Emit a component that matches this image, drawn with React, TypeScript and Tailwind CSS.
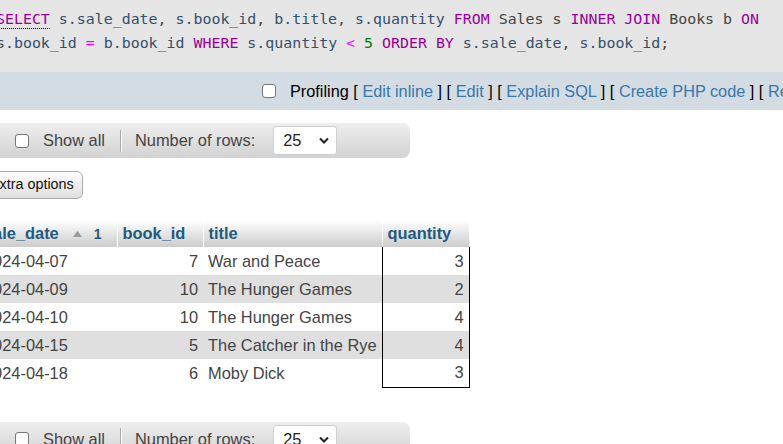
const kw = 'text-[#990099]';
const col = 'text-[#34506b]';
const tbl = 'text-[#444]';
const op = 'text-[#ff00ff]';
const num = 'text-[#008000]';

const rows = [
  { date: '2024-04-07', id: 7, title: 'War and Peace', qty: 3 },
  { date: '2024-04-09', id: 10, title: 'The Hunger Games', qty: 2 },
  { date: '2024-04-10', id: 10, title: 'The Hunger Games', qty: 4 },
  { date: '2024-04-15', id: 5, title: 'The Catcher in the Rye', qty: 4 },
  { date: '2024-04-18', id: 6, title: 'Moby Dick', qty: 3 },
];

const Checkbox = () => (
  <span className="inline-block w-[14px] h-[14px] shrink-0 rounded-[3px] border border-[#767676] bg-white" />
);

const Chevron = () => (
  <svg width="10" height="7" viewBox="0 0 10 7">
    <polyline points="1,1.5 5,5.5 9,1.5" fill="none" stroke="#222" strokeWidth="2" />
  </svg>
);

const NavBar = () => (
  <div className="flex items-center h-[35px] w-[431px] rounded-lg bg-gradient-to-b from-[#eeeeee] to-[#d2d2d2] pl-[36px] text-[16.4px] text-[#444] whitespace-nowrap">
    <Checkbox />
    <span className="ml-[14px]">Show all</span>
    <span className="ml-[15px] h-[22px] w-[2px] border-l border-r border-l-[#a8a8a8] border-r-white" />
    <span className="ml-[13px]">Number of rows:</span>
    <div className="ml-[18px] flex items-center justify-between w-[64px] h-[29px] pl-[9px] pr-[7px] rounded-[3px] border border-[#cfcfcf] bg-white text-[#222]">
      <span>25</span>
      <Chevron />
    </div>
  </div>
);

const SortArrow = () => (
  <svg width="9" height="6" viewBox="0 0 9 6" className="inline-block ml-[14px] mb-[1px]">
    <polygon points="0,6 4.5,0 9,6" fill="#9a9a9a" />
  </svg>
);

export default function App() {
  return (
    <div className="w-[783px] h-[444px] overflow-hidden bg-white font-['Liberation_Sans',Arial,sans-serif]">
      {/* SQL query */}
      <div className="h-[72px] bg-[#e5e5e5] pt-[7px]">
        <div className="-ml-[4px] font-['DejaVu_Sans_Mono',monospace] text-[14.92px] leading-[24px] whitespace-pre text-[#444]">
          <div>
            <span className={`${kw} border-b border-dotted border-black`}>SELECT</span>{' '}
            <span className={col}>s.sale_date</span>, <span className={col}>s.book_id</span>,{' '}
            <span className={col}>b.title</span>, <span className={col}>s.quantity</span>{' '}
            <span className={kw}>FROM</span> <span className={tbl}>Sales s</span>{' '}
            <span className={kw}>INNER JOIN</span> <span className={tbl}>Books b</span>{' '}
            <span className={kw}>ON</span>
          </div>
          <div>
            <span className={col}>s.book_id</span> <span className={op}>=</span>{' '}
            <span className={col}>b.book_id</span> <span className={kw}>WHERE</span>{' '}
            <span className={col}>s.quantity</span> <span className={op}>&lt;</span>{' '}
            <span className={num}>5</span> <span className={kw}>ORDER BY</span>{' '}
            <span className={col}>s.sale_date</span>, <span className={col}>s.book_id</span>;
          </div>
        </div>
      </div>

      {/* Profiling bar */}
      <div className="flex items-center h-[38px] bg-[#d3dce3] pl-[262px] text-[16.3px] text-black whitespace-nowrap">
        <Checkbox />
        <span className="ml-[14px]">
          Profiling [ <a className="text-[#3a77aa]">Edit inline</a> ] [ <a className="text-[#3a77aa]">Edit</a> ] [{' '}
          <a className="text-[#3a77aa]">Explain SQL</a> ] [ <a className="text-[#3a77aa]">Create PHP code</a> ] [{' '}
          <a className="text-[#3a77aa]">Refresh</a> ]
        </span>
      </div>

      <div className="-ml-[21px]">
        <div className="mt-[13px]">
          <NavBar />
        </div>

        <button className="mt-[13px] ml-[2px] h-[28px] px-[8px] rounded-[6px] border border-[#aaa] bg-gradient-to-b from-[#fdfdfd] to-[#dedede] text-[14.35px] text-[#111]">
          Extra options
        </button>

        <table className="mt-[21px] table-fixed border-collapse w-[490px] text-[16.4px] text-[#444]">
          <colgroup>
            <col className="w-[138px]" />
            <col className="w-[86px]" />
            <col className="w-[179px]" />
            <col className="w-[87px]" />
          </colgroup>
          <thead>
            <tr className="h-[27px]">
              {['sale_date', 'book_id', 'title', 'quantity'].map((h, i) => (
                <th
                  key={h}
                  className="p-0 pl-[5px] text-left align-middle font-bold text-[#235a81] bg-gradient-to-b from-white to-[#cccccc] border-r border-white whitespace-nowrap"
                >
                  {h}
                  {i === 0 && (
                    <>
                      <SortArrow />
                      <span className="ml-[12px] text-[14px]">1</span>
                    </>
                  )}
                </th>
              ))}
            </tr>
          </thead>
          <tbody>
            {rows.map((r, i) => (
              <tr key={r.date} className={`h-[28px] ${i % 2 === 1 ? 'bg-[#dfdfdf]' : 'bg-white'}`}>
                <td className="p-0 pl-[5px] whitespace-nowrap">{r.date}</td>
                <td className="p-0 pr-[5px] text-right">{r.id}</td>
                <td className="p-0 pl-[5px] whitespace-nowrap">{r.title}</td>
                <td
                  className={`p-0 pr-[5px] text-right border-l border-r border-black ${
                    i === rows.length - 1 ? 'border-b' : ''
                  }`}
                >
                  {r.qty}
                </td>
              </tr>
            ))}
          </tbody>
        </table>

        <div className="mt-[34px]">
          <NavBar />
        </div>
      </div>
    </div>
  );
}
